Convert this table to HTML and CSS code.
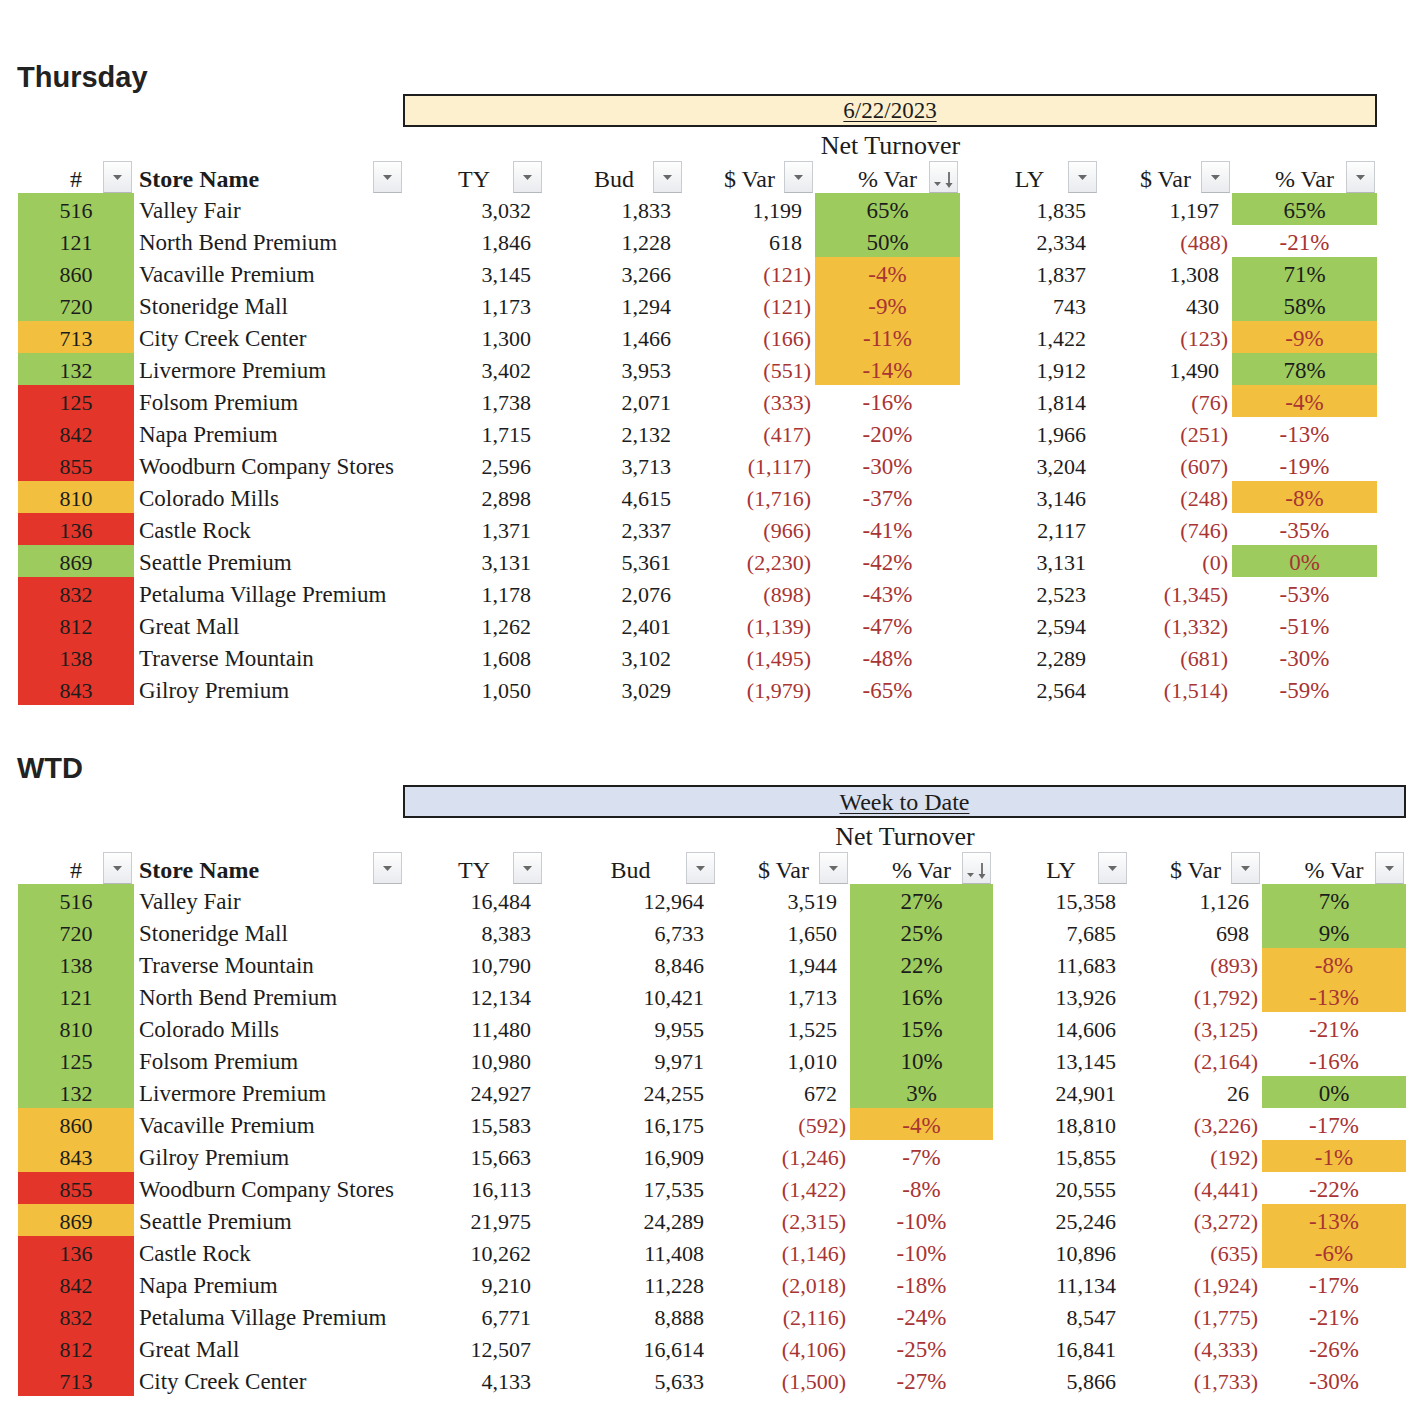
FILE: index.html
```html
<!DOCTYPE html>
<html lang="en">
<head>
<meta charset="utf-8">
<title>Net Turnover</title>
<link rel="stylesheet" href="styles.css">
</head>
<body>
<main class="page">

<section class="report">
  <h2 class="title">Thursday</h2>
  <div class="sheet sheet-day">
    <div class="banner banner-day"><span>6/22/2023</span></div>
    <div class="group">Net Turnover</div>

    <div class="hd">#<span class="btn"><svg viewBox="0 0 27 30"><polygon points="9,13 18,13 13.5,18"/></svg></span></div>
    <div class="hd hd-name">Store Name<span class="btn"><svg viewBox="0 0 27 30"><polygon points="9,13 18,13 13.5,18"/></svg></span></div>
    <div class="hd">TY<span class="btn"><svg viewBox="0 0 27 30"><polygon points="9,13 18,13 13.5,18"/></svg></span></div>
    <div class="hd">Bud<span class="btn"><svg viewBox="0 0 27 30"><polygon points="9,13 18,13 13.5,18"/></svg></span></div>
    <div class="hd">$ Var<span class="btn"><svg viewBox="0 0 27 30"><polygon points="9,13 18,13 13.5,18"/></svg></span></div>
    <div class="hd">% Var<span class="btn"><svg viewBox="0 0 27 30"><polygon points="4,20 11,20 7.5,24"/><line x1="19" y1="10" x2="19" y2="23"/><polygon points="15.5,21 22.5,21 19,26"/></svg></span></div>
    <div class="hd">LY<span class="btn"><svg viewBox="0 0 27 30"><polygon points="9,13 18,13 13.5,18"/></svg></span></div>
    <div class="hd">$ Var<span class="btn"><svg viewBox="0 0 27 30"><polygon points="9,13 18,13 13.5,18"/></svg></span></div>
    <div class="hd">% Var<span class="btn"><svg viewBox="0 0 27 30"><polygon points="9,13 18,13 13.5,18"/></svg></span></div>

    <div class="id g">516</div><div class="name">Valley Fair</div><div class="num">3,032</div><div class="num">1,833</div><div class="num">1,199</div><div class="pct g">65%</div><div class="num">1,835</div><div class="num">1,197</div><div class="pct g">65%</div>
    <div class="id g">121</div><div class="name">North Bend Premium</div><div class="num">1,846</div><div class="num">1,228</div><div class="num">618</div><div class="pct g">50%</div><div class="num">2,334</div><div class="num neg">(488)</div><div class="pct neg">-21%</div>
    <div class="id g">860</div><div class="name">Vacaville Premium</div><div class="num">3,145</div><div class="num">3,266</div><div class="num neg">(121)</div><div class="pct o neg">-4%</div><div class="num">1,837</div><div class="num">1,308</div><div class="pct g">71%</div>
    <div class="id g">720</div><div class="name">Stoneridge Mall</div><div class="num">1,173</div><div class="num">1,294</div><div class="num neg">(121)</div><div class="pct o neg">-9%</div><div class="num">743</div><div class="num">430</div><div class="pct g">58%</div>
    <div class="id o">713</div><div class="name">City Creek Center</div><div class="num">1,300</div><div class="num">1,466</div><div class="num neg">(166)</div><div class="pct o neg">-11%</div><div class="num">1,422</div><div class="num neg">(123)</div><div class="pct o neg">-9%</div>
    <div class="id g">132</div><div class="name">Livermore Premium</div><div class="num">3,402</div><div class="num">3,953</div><div class="num neg">(551)</div><div class="pct o neg">-14%</div><div class="num">1,912</div><div class="num">1,490</div><div class="pct g">78%</div>
    <div class="id r">125</div><div class="name">Folsom Premium</div><div class="num">1,738</div><div class="num">2,071</div><div class="num neg">(333)</div><div class="pct neg">-16%</div><div class="num">1,814</div><div class="num neg">(76)</div><div class="pct o neg">-4%</div>
    <div class="id r">842</div><div class="name">Napa Premium</div><div class="num">1,715</div><div class="num">2,132</div><div class="num neg">(417)</div><div class="pct neg">-20%</div><div class="num">1,966</div><div class="num neg">(251)</div><div class="pct neg">-13%</div>
    <div class="id r">855</div><div class="name">Woodburn Company Stores</div><div class="num">2,596</div><div class="num">3,713</div><div class="num neg">(1,117)</div><div class="pct neg">-30%</div><div class="num">3,204</div><div class="num neg">(607)</div><div class="pct neg">-19%</div>
    <div class="id o">810</div><div class="name">Colorado Mills</div><div class="num">2,898</div><div class="num">4,615</div><div class="num neg">(1,716)</div><div class="pct neg">-37%</div><div class="num">3,146</div><div class="num neg">(248)</div><div class="pct o neg">-8%</div>
    <div class="id r">136</div><div class="name">Castle Rock</div><div class="num">1,371</div><div class="num">2,337</div><div class="num neg">(966)</div><div class="pct neg">-41%</div><div class="num">2,117</div><div class="num neg">(746)</div><div class="pct neg">-35%</div>
    <div class="id g">869</div><div class="name">Seattle Premium</div><div class="num">3,131</div><div class="num">5,361</div><div class="num neg">(2,230)</div><div class="pct neg">-42%</div><div class="num">3,131</div><div class="num neg">(0)</div><div class="pct g neg">0%</div>
    <div class="id r">832</div><div class="name">Petaluma Village Premium</div><div class="num">1,178</div><div class="num">2,076</div><div class="num neg">(898)</div><div class="pct neg">-43%</div><div class="num">2,523</div><div class="num neg">(1,345)</div><div class="pct neg">-53%</div>
    <div class="id r">812</div><div class="name">Great Mall</div><div class="num">1,262</div><div class="num">2,401</div><div class="num neg">(1,139)</div><div class="pct neg">-47%</div><div class="num">2,594</div><div class="num neg">(1,332)</div><div class="pct neg">-51%</div>
    <div class="id r">138</div><div class="name">Traverse Mountain</div><div class="num">1,608</div><div class="num">3,102</div><div class="num neg">(1,495)</div><div class="pct neg">-48%</div><div class="num">2,289</div><div class="num neg">(681)</div><div class="pct neg">-30%</div>
    <div class="id r">843</div><div class="name">Gilroy Premium</div><div class="num">1,050</div><div class="num">3,029</div><div class="num neg">(1,979)</div><div class="pct neg">-65%</div><div class="num">2,564</div><div class="num neg">(1,514)</div><div class="pct neg">-59%</div>
  </div>
</section>

<section class="report report-wtd">
  <h2 class="title">WTD</h2>
  <div class="sheet sheet-wtd">
    <div class="banner banner-wtd"><span>Week to Date</span></div>
    <div class="group">Net Turnover</div>

    <div class="hd">#<span class="btn"><svg viewBox="0 0 27 30"><polygon points="9,13 18,13 13.5,18"/></svg></span></div>
    <div class="hd hd-name">Store Name<span class="btn"><svg viewBox="0 0 27 30"><polygon points="9,13 18,13 13.5,18"/></svg></span></div>
    <div class="hd">TY<span class="btn"><svg viewBox="0 0 27 30"><polygon points="9,13 18,13 13.5,18"/></svg></span></div>
    <div class="hd">Bud<span class="btn"><svg viewBox="0 0 27 30"><polygon points="9,13 18,13 13.5,18"/></svg></span></div>
    <div class="hd">$ Var<span class="btn"><svg viewBox="0 0 27 30"><polygon points="9,13 18,13 13.5,18"/></svg></span></div>
    <div class="hd">% Var<span class="btn"><svg viewBox="0 0 27 30"><polygon points="4,20 11,20 7.5,24"/><line x1="19" y1="10" x2="19" y2="23"/><polygon points="15.5,21 22.5,21 19,26"/></svg></span></div>
    <div class="hd">LY<span class="btn"><svg viewBox="0 0 27 30"><polygon points="9,13 18,13 13.5,18"/></svg></span></div>
    <div class="hd">$ Var<span class="btn"><svg viewBox="0 0 27 30"><polygon points="9,13 18,13 13.5,18"/></svg></span></div>
    <div class="hd">% Var<span class="btn"><svg viewBox="0 0 27 30"><polygon points="9,13 18,13 13.5,18"/></svg></span></div>

    <div class="id g">516</div><div class="name">Valley Fair</div><div class="num">16,484</div><div class="num">12,964</div><div class="num">3,519</div><div class="pct g">27%</div><div class="num">15,358</div><div class="num">1,126</div><div class="pct g">7%</div>
    <div class="id g">720</div><div class="name">Stoneridge Mall</div><div class="num">8,383</div><div class="num">6,733</div><div class="num">1,650</div><div class="pct g">25%</div><div class="num">7,685</div><div class="num">698</div><div class="pct g">9%</div>
    <div class="id g">138</div><div class="name">Traverse Mountain</div><div class="num">10,790</div><div class="num">8,846</div><div class="num">1,944</div><div class="pct g">22%</div><div class="num">11,683</div><div class="num neg">(893)</div><div class="pct o neg">-8%</div>
    <div class="id g">121</div><div class="name">North Bend Premium</div><div class="num">12,134</div><div class="num">10,421</div><div class="num">1,713</div><div class="pct g">16%</div><div class="num">13,926</div><div class="num neg">(1,792)</div><div class="pct o neg">-13%</div>
    <div class="id g">810</div><div class="name">Colorado Mills</div><div class="num">11,480</div><div class="num">9,955</div><div class="num">1,525</div><div class="pct g">15%</div><div class="num">14,606</div><div class="num neg">(3,125)</div><div class="pct neg">-21%</div>
    <div class="id g">125</div><div class="name">Folsom Premium</div><div class="num">10,980</div><div class="num">9,971</div><div class="num">1,010</div><div class="pct g">10%</div><div class="num">13,145</div><div class="num neg">(2,164)</div><div class="pct neg">-16%</div>
    <div class="id g">132</div><div class="name">Livermore Premium</div><div class="num">24,927</div><div class="num">24,255</div><div class="num">672</div><div class="pct g">3%</div><div class="num">24,901</div><div class="num">26</div><div class="pct g">0%</div>
    <div class="id o">860</div><div class="name">Vacaville Premium</div><div class="num">15,583</div><div class="num">16,175</div><div class="num neg">(592)</div><div class="pct o neg">-4%</div><div class="num">18,810</div><div class="num neg">(3,226)</div><div class="pct neg">-17%</div>
    <div class="id o">843</div><div class="name">Gilroy Premium</div><div class="num">15,663</div><div class="num">16,909</div><div class="num neg">(1,246)</div><div class="pct neg">-7%</div><div class="num">15,855</div><div class="num neg">(192)</div><div class="pct o neg">-1%</div>
    <div class="id r">855</div><div class="name">Woodburn Company Stores</div><div class="num">16,113</div><div class="num">17,535</div><div class="num neg">(1,422)</div><div class="pct neg">-8%</div><div class="num">20,555</div><div class="num neg">(4,441)</div><div class="pct neg">-22%</div>
    <div class="id o">869</div><div class="name">Seattle Premium</div><div class="num">21,975</div><div class="num">24,289</div><div class="num neg">(2,315)</div><div class="pct neg">-10%</div><div class="num">25,246</div><div class="num neg">(3,272)</div><div class="pct o neg">-13%</div>
    <div class="id r">136</div><div class="name">Castle Rock</div><div class="num">10,262</div><div class="num">11,408</div><div class="num neg">(1,146)</div><div class="pct neg">-10%</div><div class="num">10,896</div><div class="num neg">(635)</div><div class="pct o neg">-6%</div>
    <div class="id r">842</div><div class="name">Napa Premium</div><div class="num">9,210</div><div class="num">11,228</div><div class="num neg">(2,018)</div><div class="pct neg">-18%</div><div class="num">11,134</div><div class="num neg">(1,924)</div><div class="pct neg">-17%</div>
    <div class="id r">832</div><div class="name">Petaluma Village Premium</div><div class="num">6,771</div><div class="num">8,888</div><div class="num neg">(2,116)</div><div class="pct neg">-24%</div><div class="num">8,547</div><div class="num neg">(1,775)</div><div class="pct neg">-21%</div>
    <div class="id r">812</div><div class="name">Great Mall</div><div class="num">12,507</div><div class="num">16,614</div><div class="num neg">(4,106)</div><div class="pct neg">-25%</div><div class="num">16,841</div><div class="num neg">(4,333)</div><div class="pct neg">-26%</div>
    <div class="id r">713</div><div class="name">City Creek Center</div><div class="num">4,133</div><div class="num">5,633</div><div class="num neg">(1,500)</div><div class="pct neg">-27%</div><div class="num">5,866</div><div class="num neg">(1,733)</div><div class="pct neg">-30%</div>
  </div>
</section>

</main>
</body>
</html>
```
FILE: styles.css
```css
html, body {
  margin: 0;
  padding: 0;
  background: #ffffff;
}

.page {
  padding: 61px 0 0 0;
}

.report-wtd {
  margin-top: 47px;
}

.title {
  margin: 0 0 1px 17px;
  font-family: "Liberation Sans", Arial, sans-serif;
  font-weight: bold;
  font-size: 29px;
  line-height: 32px;
  color: #222222;
}

.sheet {
  display: grid;
  margin-left: 18px;
  grid-template-rows: 33px 33px 33px;
  grid-auto-rows: 32px;
  font-family: "Liberation Serif", "Times New Roman", serif;
  color: #1c1c1c;
}

.sheet-day {
  grid-template-columns: 116px 270px 140px 140px 131px 145px 139px 133px 145px;
}

.sheet-wtd {
  grid-template-columns: 116px 270px 140px 173px 133px 143px 136px 133px 144px;
}

.banner {
  grid-column: 3 / -1;
  margin-left: -1px;
  border: 2px solid #1e1e1e;
  box-sizing: border-box;
  text-align: center;
  font-size: 23px;
  line-height: 30px;
}

.banner span {
  text-decoration: underline;
  text-decoration-thickness: 1px;
  text-underline-offset: 3px;
}

.banner-day {
  background: #fcf0cf;
}

.banner-wtd {
  background: #d9e0ef;
  font-size: 24px;
}

.group {
  grid-column: 3 / -1;
  text-align: center;
  font-size: 26px;
  line-height: 33px;
  padding-top: 2px;
  white-space: nowrap;
}

.hd {
  position: relative;
  text-align: center;
  font-size: 24px;
  line-height: 33px;
  padding-top: 3px;
  box-sizing: border-box;
  white-space: nowrap;
}

.hd-name {
  text-align: left;
  padding-left: 5px;
  font-weight: bold;
}

.btn {
  position: absolute;
  right: 2px;
  top: 1px;
  width: 29px;
  height: 32px;
  box-sizing: border-box;
  border: 1px solid #c9ccd1;
  border-bottom-color: #b4b7bc;
  background: linear-gradient(#fefefe, #e9ebef);
  display: flex;
}

.btn svg {
  width: 27px;
  height: 30px;
  fill: #686868;
  stroke: #585858;
  stroke-width: 0;
}

.btn line {
  stroke-width: 1.6;
}

.id,
.name,
.num,
.pct {
  line-height: 32px;
  padding-top: 2px;
  box-sizing: border-box;
  white-space: nowrap;
  font-size: 22px;
}

.id {
  text-align: center;
}

.name {
  padding-left: 5px;
  font-size: 23px;
}

.num {
  text-align: right;
  padding-right: 13px;
}

.pct {
  text-align: center;
  font-size: 23px;
}

.neg {
  color: #a83434;
}

.num.neg {
  padding-right: 4px;
}

.g {
  background: #9dcb5d;
}

.o {
  background: #f2bf3e;
}

.r {
  background: #e3352a;
}
```
